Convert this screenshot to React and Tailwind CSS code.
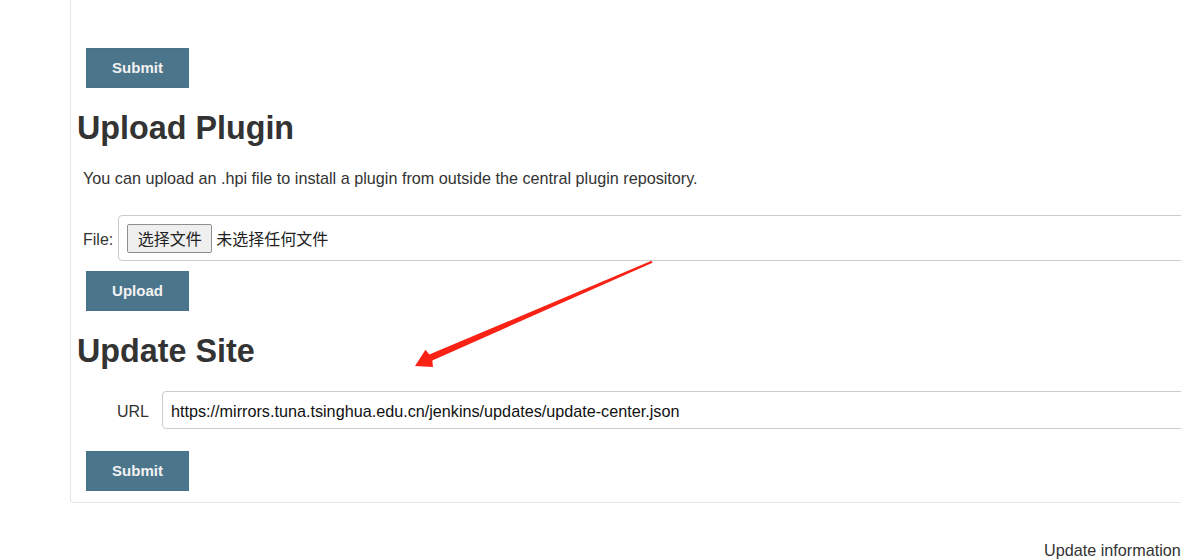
export default function App() {
  const font = { fontFamily: '"Liberation Sans", Arial, "Noto Sans CJK SC", sans-serif' };

  return (
    <div
      className="relative h-[559px] w-[1181px] overflow-hidden bg-white text-[#333]"
      style={font}
    >
      {/* plugin manager panel, scrolled so its top is out of view */}
      <div className="ml-[70px] w-[1200px] rounded-bl-[4px] border-b border-l border-[#e6e6e6] pb-[11px] pt-[48px]">
        <button className="ml-[15px] block h-[40px] w-[103px] border border-[#48718a] bg-[#4b758b] text-[15px] font-bold text-[#f2f2f2]">
          Submit
        </button>

        <h1 className="ml-[6px] mt-[22px] text-[32.3px] font-bold leading-[36px] text-[#333]">
          Upload Plugin
        </h1>
        <p className="ml-[12px] mt-[22px] text-[16.2px] leading-[20px]">
          You can upload an .hpi file to install a plugin from outside the central plugin repository.
        </p>

        <div className="ml-[12px] mt-[27px] flex items-center gap-[5px]">
          <span className="pt-[3px] text-[16px] leading-[20px]">File:</span>
          <div className="flex h-[46px] flex-1 items-center rounded-[4px] border border-[#cccccc] pl-[8px]">
            <span
              className="flex h-[29px] w-[85px] items-center justify-center rounded-[2px] border border-[#8f8f8f] bg-[#efefef] text-[16px] text-[#222]"
              style={{ fontFamily: '"Noto Sans CJK SC", sans-serif' }}
            >
              选择文件
            </span>
            <span
              className="ml-[4px] text-[16px] text-[#222]"
              style={{ fontFamily: '"Noto Sans CJK SC", sans-serif' }}
            >
              未选择任何文件
            </span>
          </div>
        </div>

        <button className="ml-[15px] mt-[10px] block h-[40px] w-[103px] border border-[#48718a] bg-[#4b758b] text-[15px] font-bold text-[#f2f2f2]">
          Upload
        </button>

        <h1 className="ml-[6px] mt-[22px] text-[32.3px] font-bold leading-[36px] text-[#333]">
          Update Site
        </h1>

        <div className="mt-[22px] flex items-center">
          <span className="ml-[46px] w-[45px] pt-[3px] text-[16px] leading-[20px]">URL</span>
          <div className="flex h-[38px] flex-1 items-center rounded-[4px] border border-[#cccccc] pl-[8px] pt-[2px] text-[16.2px] text-[#111]">
            https://mirrors.tuna.tsinghua.edu.cn/jenkins/updates/update-center.json
          </div>
        </div>

        <button className="ml-[15px] mt-[22px] block h-[40px] w-[103px] border border-[#48718a] bg-[#4b758b] text-[15px] font-bold text-[#f2f2f2]">
          Submit
        </button>
      </div>

      <div className="ml-[1044px] mt-[37px] whitespace-nowrap text-[16.2px] leading-[20px]">
        Update information
      </div>

      {/* red annotation arrow */}
      <svg
        className="pointer-events-none absolute left-0 top-0"
        width="1181"
        height="559"
        viewBox="0 0 1181 559"
      >
        <polygon
          points="415,366 425.5,349.8 429.3,354.6 651.5,260.8 652.5,262.8 432.3,360.4 433,367"
          fill="#fa2215"
        />
      </svg>
    </div>
  );
}
